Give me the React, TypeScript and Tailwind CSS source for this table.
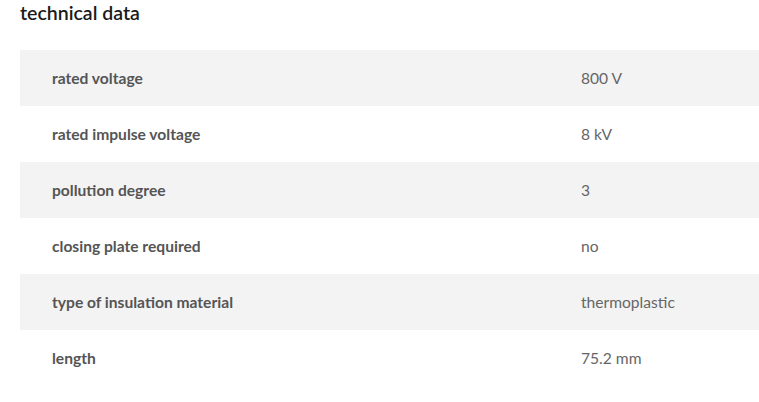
import React from 'react';

const rows: [string, string][] = [
  ['rated voltage', '800 V'],
  ['rated impulse voltage', '8 kV'],
  ['pollution degree', '3'],
  ['closing plate required', 'no'],
  ['type of insulation material', 'thermoplastic'],
  ['length', '75.2 mm'],
];

const App: React.FC = () => {
  return (
    <div className="min-h-screen bg-white pl-5" style={{ fontFamily: 'Lato, "Open Sans", sans-serif' }}>
      <h2 className="text-[19.5px] font-semibold text-[#1a1a1a] leading-[26px]">technical data</h2>
      <div className="mt-6">
        {rows.map(([label, value], i) => (
          <div
            key={label}
            className={`flex items-center h-14 pt-[2px] ${i % 2 === 0 ? 'bg-[#f3f3f3]' : 'bg-white'}`}
          >
            <div className="w-[561px] pl-8 text-[15.6px] font-bold text-[#555555]">{label}</div>
            <div className="text-[15.6px] text-[#666666]">{value}</div>
          </div>
        ))}
      </div>
    </div>
  );
};

export default App;
